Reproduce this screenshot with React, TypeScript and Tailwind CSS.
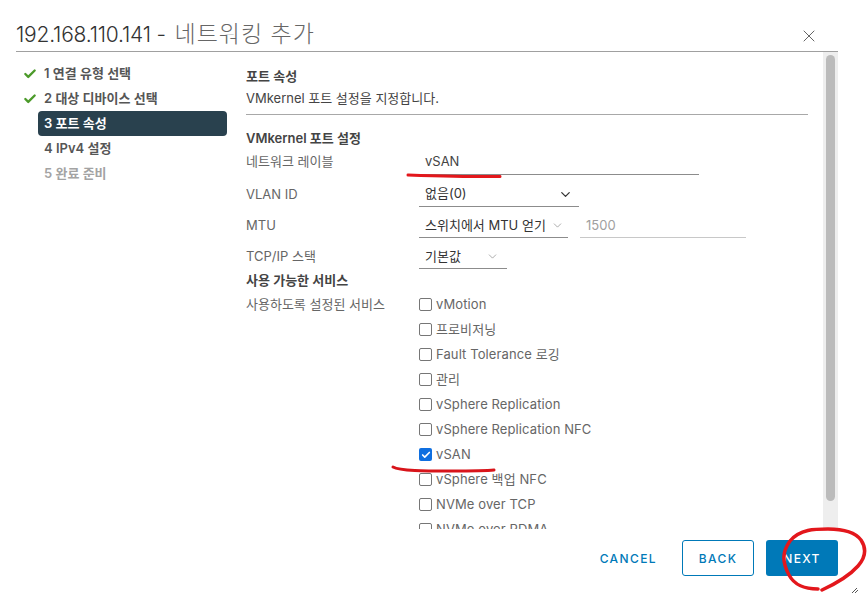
import { Check, ChevronDown, X } from "lucide-react";
import type React from "react";

const steps = [
  { label: "1 연결 유형 선택", done: true },
  { label: "2 대상 디바이스 선택", done: true },
  { label: "3 포트 속성", active: true },
  { label: "4 IPv4 설정" },
  { label: "5 완료 준비", muted: true },
];

const services = [
  { label: "vMotion" },
  { label: "프로비저닝" },
  { label: "Fault Tolerance 로깅" },
  { label: "관리" },
  { label: "vSphere Replication" },
  { label: "vSphere Replication NFC" },
  { label: "vSAN", checked: true },
  { label: "vSphere 백업 NFC" },
  { label: "NVMe over TCP" },
  { label: "NVMe over RDMA" },
];

function StepItem({ label, done, active, muted }: { label: string; done?: boolean; active?: boolean; muted?: boolean }) {
  return (
    <div className="flex h-[25px] items-center">
      <div className="flex w-[22px] justify-start pl-[7px]">
        {done && <Check size={14} strokeWidth={4} className="text-[#4c9a2a]" />}
      </div>
      <div
        className={
          "flex h-[25px] w-[189px] items-center rounded-[4px] pl-[6px] text-[13px] font-semibold " +
          (active ? "bg-[#29414e] text-white" : muted ? "text-[#a3a3a3]" : "text-[#565656]")
        }
      >
        {label}
      </div>
    </div>
  );
}

function FormRow({ label, height, children }: { label: string; height: string; children: React.ReactNode }) {
  return (
    <div className={"flex items-stretch " + height}>
      <div className="flex w-[173px] shrink-0 items-center text-[13px] text-[#666666]">{label}</div>
      {children}
    </div>
  );
}

function ServiceRow({ label, checked }: { label: string; checked?: boolean }) {
  return (
    <div className="flex h-[25px] shrink-0 items-center">
      {checked ? (
        <div className="flex h-[13px] w-[13px] items-center justify-center rounded-[2px] bg-[#0f6fe0]">
          <Check size={10} strokeWidth={4} className="text-white" />
        </div>
      ) : (
        <div className="h-[13px] w-[13px] rounded-[2px] border border-[#767676]" />
      )}
      <span className="ml-[4px] text-[13px] tracking-[0.1px] text-[#666666]">{label}</span>
    </div>
  );
}

export default function App() {
  return (
    <div
      className="relative h-[593px] w-[867px] overflow-hidden bg-white"
      style={{ fontFamily: "Inter, 'Noto Sans CJK KR', sans-serif" }}
    >
      {/* title */}
      <div className="ml-4 flex h-[52px] w-[822px] items-start justify-between border-b border-[#a0a0a0] pt-[19px]">
        <div className="whitespace-nowrap text-[21px] font-light leading-[30px] tracking-[-0.2px] text-[#333333]">
          192.168.110.141 -{" "}
          <span className="ml-[3px] text-[23px] tracking-[1px] text-[#666666]">네트워킹 추가</span>
        </div>
        <X size={20} strokeWidth={1} className="mr-[19px] mt-[7px] text-[#444444]" />
      </div>

      <div className="flex h-[477px]">
        {/* wizard steps */}
        <div className="w-[246px] shrink-0 pl-[16px] pt-[9px]">
          {steps.map((s) => (
            <StepItem key={s.label} {...s} />
          ))}
        </div>

        {/* form */}
        <div className="h-[477px] w-[562px] shrink-0 overflow-hidden">
          <div className="mt-[15px] text-[13px] font-semibold leading-[18px] text-[#444444]">포트 속성</div>
          <div className="mt-[4px] border-b border-[#a8a8a8] pb-[7px] text-[13px] leading-[18px] text-[#444444]">
            VMkernel 포트 설정을 지정합니다.
          </div>
          <div className="mt-[14px] text-[13px] font-semibold leading-[18px] text-[#444444]">VMkernel 포트 설정</div>

          <FormRow label="네트워크 레이블" height="h-[28px] pt-[2px]">
            <div className="-ml-[12px] flex h-full w-[292px] items-center border-b border-[#8c8c8c] pl-[18px] text-[13px] text-[#444444]">
              vSAN
            </div>
          </FormRow>
          <FormRow label="VLAN ID" height="h-[32px] pt-[7px]">
            <div className="flex h-full w-[160px] items-center justify-between border-b border-[#8c8c8c] px-[6px] text-[13px] text-[#333333]">
              없음(0)
              <ChevronDown size={15} strokeWidth={2} className="text-[#333333]" />
            </div>
          </FormRow>
          <FormRow label="MTU" height="h-[31px] pt-[7px]">
            <div className="flex h-full w-[149px] items-center justify-between border-b border-[#8c8c8c] pl-[6px] pr-[4px] text-[13px] text-[#333333]">
              <span className="whitespace-nowrap">스위치에서 MTU 얻기</span>
              <ChevronDown size={13} strokeWidth={1} className="text-[#666666]" />
            </div>
            <div className="ml-[12px] flex h-full w-[166px] items-center border-b border-[#c8c8c8] pl-[6px] text-[13px] text-[#a0a0a0]">
              1500
            </div>
          </FormRow>
          <FormRow label="TCP/IP 스택" height="h-[31px] pt-[7px]">
            <div className="flex h-full w-[88px] items-center justify-between border-b border-[#8c8c8c] pl-[6px] pr-[8px] text-[13px] text-[#333333]">
              기본값
              <ChevronDown size={13} strokeWidth={1} className="text-[#666666]" />
            </div>
          </FormRow>

          <div className="mt-[2px] text-[13px] font-semibold leading-[18px] text-[#444444]">사용 가능한 서비스</div>
          <div className="mt-[3px] flex">
            <div className="w-[173px] shrink-0 pt-[3px] text-[13px] leading-[18px] text-[#666666]">사용하도록 설정된 서비스</div>
            <div className="flex flex-col">
              {services.map((s) => (
                <ServiceRow key={s.label} {...s} />
              ))}
            </div>
          </div>
        </div>

        {/* scrollbar */}
        <div className="ml-[15px] h-[477px] w-[15px] shrink-0 bg-[#eeeeee] px-[3px] pt-[3px]">
          <div className="h-[446px] w-[9px] rounded-[5px] bg-[#bbbbbb]" />
        </div>
      </div>

      {/* footer */}
      <div className="mt-[11px] flex w-[838px] items-center justify-end text-[12px] font-medium tracking-[1.4px]">
        <span className="mr-[25px] pt-[1px] text-[#0079b8]">CANCEL</span>
        <div className="mr-[12px] flex h-[36px] w-[72px] items-center justify-center rounded-[3px] border border-[#0079b8] pt-[1px] text-[#0079b8]">
          BACK
        </div>
        <div className="flex h-[36px] w-[72px] items-center justify-center rounded-[3px] bg-[#0079b8] pt-[1px] text-white">
          NEXT
        </div>
      </div>

      {/* hand-drawn red marks */}
      <svg className="pointer-events-none absolute left-0 top-0" width="867" height="593" fill="none">
        <path d="M408 175 C440 176 475 177 500 176.5" stroke="#e3171c" strokeWidth="3" strokeLinecap="round" />
        <path d="M393 467 C400 471 425 471 450 471 C470 471 485 471 494 470" stroke="#d8141a" strokeWidth="3" strokeLinecap="round" />
        <path
          d="M818 589 C805 589 795 586 789 575 C782 562 782 552 790 541 C800 529 815 529 828 529 C842 529 855 532 861 540 C867 549 865 558 858 566 C850 575 835 584 822 590"
          stroke="#e3171c"
          strokeWidth="3.5"
          strokeLinecap="round"
        />
      </svg>
      {/* resize grip */}
      <svg className="absolute left-[852px] top-[588px]" width="6" height="5" stroke="#555555" strokeWidth="1">
        <path d="M0 5 L5 0 M3 5 L6 2" />
      </svg>
    </div>
  );
}
